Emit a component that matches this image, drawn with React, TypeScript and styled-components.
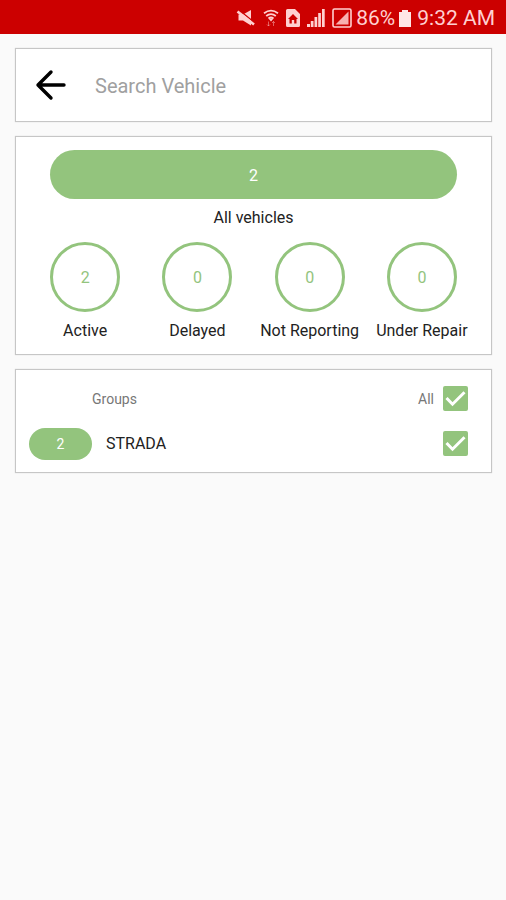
import React, { useState } from "react";
import styled, { createGlobalStyle } from "styled-components";

const GREEN = "#93c47d";
const STATUS_INK = "#ffd0d0";

const GlobalStyle = createGlobalStyle`
  *, *::before, *::after { box-sizing: border-box; }
  body {
    margin: 0;
    background: #fafafa;
    color: #222;
    font-family: Roboto, "Liberation Sans", sans-serif;
  }
  button, input { font: inherit; color: inherit; }
`;

const StatusBar = styled.header`
  display: flex;
  align-items: center;
  justify-content: flex-end;
  height: 34px;
  padding: 2px 11px 0 0;
  background: #cc0000;
  color: ${STATUS_INK};
  font-size: 21px;
  line-height: 24px;

  svg { display: block; flex: none; }
`;

const StatusIcons = styled.div`
  display: flex;
  align-items: center;
  gap: 7px;
  margin-right: 4px;
`;

const BatteryLevel = styled.span`
  margin-right: 4px;
`;

const Clock = styled.time`
  margin-left: 6px;
`;

const Page = styled.main`
  display: flex;
  flex-direction: column;
  gap: 14px;
  padding: 14px 14px 14px 15px;
`;

const Card = styled.section`
  background: #fff;
  border: 1px solid #c6c6c6;
  box-shadow: 0 0 1px #d0d0d0;
`;

const SearchCard = styled(Card)`
  display: flex;
  align-items: center;
  gap: 28px;
  height: 74px;
  padding: 0 19px;
`;

const BackButton = styled.button`
  display: block;
  flex: none;
  padding: 0;
  border: 0;
  background: none;
  color: #000;
  cursor: pointer;

  svg { display: block; }
`;

const SearchInput = styled.input`
  flex: 1;
  min-width: 0;
  height: 40px;
  padding: 2px 0 0;
  border: 0;
  outline: 0;
  background: none;
  font-size: 20px;

  &::placeholder { color: #a0a0a0; opacity: 1; }
`;

const SummaryCard = styled(Card)`
  padding: 13px;
`;

const Total = styled.div`
  display: flex;
  flex-direction: column;
  align-items: center;
  gap: 9px;
  padding: 0 21px;
`;

const TotalButton = styled.button`
  width: 100%;
  height: 49px;
  padding: 2px 0 0;
  border: 0;
  border-radius: 25px;
  background: ${GREEN};
  color: #fff;
  font-size: 16px;
  cursor: pointer;
`;

const Label = styled.span`
  font-size: 16px;
  line-height: 20px;
  white-space: nowrap;
`;

const StatusGrid = styled.div`
  display: grid;
  grid-template-columns: repeat(4, 1fr);
  margin-top: 14px;
`;

const StatusItem = styled.div`
  display: flex;
  flex-direction: column;
  align-items: center;
  gap: 9px;
`;

const StatusButton = styled.button`
  width: 70px;
  height: 70px;
  padding: 1px 0 0;
  border: 3px solid ${GREEN};
  border-radius: 50%;
  background: #fff;
  color: ${GREEN};
  font-size: 16px;
  cursor: pointer;
`;

const GroupsCard = styled(Card)`
  display: flex;
  flex-direction: column;
  gap: 13px;
  padding: 13px 23px 12px 13px;
`;

const GroupRow = styled.div`
  display: grid;
  grid-template-columns: 63px 1fr auto;
  align-items: center;
  column-gap: 14px;
  height: 32px;
`;

const GroupsTitle = styled.h2`
  grid-column: 1 / 3;
  margin: 0;
  padding-left: 63px;
  color: #777;
  font-size: 14px;
  font-weight: 400;
  line-height: 18px;
`;

const GroupCount = styled.span`
  height: 32px;
  border-radius: 16px;
  background: ${GREEN};
  color: #fff;
  font-size: 14px;
  line-height: 33px;
  text-align: center;
`;

const CheckLabel = styled.label`
  display: flex;
  align-items: center;
  gap: 9px;
  color: #777;
  font-size: 14px;
  line-height: 18px;
  cursor: pointer;
`;

const CheckBox = styled.span`
  display: grid;
  width: 25px;
  height: 26px;

  > * { grid-area: 1 / 1; }
  svg { display: block; pointer-events: none; }
`;

const CheckInput = styled.input`
  appearance: none;
  width: 25px;
  height: 25px;
  margin: 0;
  border: 2px solid ${GREEN};
  border-radius: 2px;
  background: #fff;
  cursor: pointer;

  &:checked { background: ${GREEN}; }
  &:not(:checked) + svg { visibility: hidden; }
`;

function MutedIcon() {
  return (
    <svg width="20" height="18" viewBox="0 0 20 18" aria-hidden="true">
      <path d="M2.500 5.500H7L15 1v15.500L7 11.500H2.500z" fill={STATUS_INK} />
      <path d="M3 1l16 13" stroke="#cc0000" strokeWidth="1.500" />
      <path d="M1.500 2.500L18 15.500" stroke={STATUS_INK} strokeWidth="2.600" />
    </svg>
  );
}

function WifiIcon() {
  return (
    <svg width="16" height="18" viewBox="0 0 16 18" aria-hidden="true" fill="none" stroke={STATUS_INK}>
      <path d="M1 4.200Q8-1 15 4.200M3.200 7Q8 3.200 12.800 7M5.500 9.500Q8 7.500 10.500 9.500" strokeWidth="1.800" />
      <path d="M5.500 9.500h5l-2.500 3z" fill={STATUS_INK} stroke="none" />
      <path d="M5.500 12.500v4.500M4 15.500l1.500 1.500 1.500-1.500M10.500 17v-4.500M9 14l1.500-1.500 1.500 1.500" opacity="0.45" />
    </svg>
  );
}

function SimHomeIcon() {
  return (
    <svg width="14" height="18" viewBox="0 0 14 18" aria-hidden="true">
      <path d="M1.500 0H9l5 5v11.500a1.500 1.500 0 0 1-1.500 1.500h-11A1.500 1.500 0 0 1 0 16.500v-15A1.500 1.500 0 0 1 1.500 0z" fill={STATUS_INK} />
      <path d="M7 5l5 5h-1.500v4.500H8.200V11H5.800v3.500H3.500V10H2z" fill="#cc0000" />
    </svg>
  );
}

function SignalIcon() {
  return (
    <svg width="18" height="18" viewBox="0 0 18 18" aria-hidden="true" fill={STATUS_INK}>
      <path d="M0 15h3v3H0zM3.800 12h2.700v6H3.800zM7.500 8h2.700v10H7.500zM11.200 4h2.700v14h-2.700zM15 0h2.700v18H15z" />
    </svg>
  );
}

function BoxedSignalIcon() {
  return (
    <svg width="20" height="20" viewBox="0 0 20 20" aria-hidden="true">
      <rect x="1" y="1" width="18" height="18" rx="1.500" fill="none" stroke={STATUS_INK} strokeWidth="1.600" />
      <path d="M3.500 16.500l13-13v13z" fill={STATUS_INK} opacity="0.85" />
    </svg>
  );
}

function BatteryIcon() {
  return (
    <svg width="12" height="17" viewBox="0 0 12 17" aria-hidden="true">
      <path d="M3 0h6v2h3v15H0V2h3z" fill="#ffe6e6" />
    </svg>
  );
}

function BackArrow() {
  return (
    <svg width="32" height="32" viewBox="0 0 32 32" aria-hidden="true" fill="none" stroke="currentColor" strokeWidth="3.400" strokeLinecap="round" strokeLinejoin="round">
      <path d="M29 16H3M16 3L3 16l13 13" />
    </svg>
  );
}

interface CheckProps {
  name: string;
  caption?: string;
  checked: boolean;
  onChange: (checked: boolean) => void;
}

function Check({ name, caption, checked, onChange }: CheckProps) {
  return (
    <CheckLabel>
      {caption}
      <CheckBox>
        <CheckInput
          type="checkbox"
          aria-label={name}
          checked={checked}
          onChange={(event) => onChange(event.target.checked)}
        />
        <svg width="25" height="25" viewBox="0 0 25 25" aria-hidden="true">
          <path d="M3.500 12l6 6.200L21.500 6.200" fill="none" stroke="#fff" strokeWidth="3" />
        </svg>
      </CheckBox>
    </CheckLabel>
  );
}

const statuses = [
  { label: "Active", count: 2 },
  { label: "Delayed", count: 0 },
  { label: "Not Reporting", count: 0 },
  { label: "Under Repair", count: 0 },
];

export default function App() {
  const [query, setQuery] = useState("");
  const [selected, setSelected] = useState(true);

  return (
    <>
      <GlobalStyle />
      <StatusBar>
        <StatusIcons>
          <MutedIcon />
          <WifiIcon />
          <SimHomeIcon />
          <SignalIcon />
          <BoxedSignalIcon />
        </StatusIcons>
        <BatteryLevel>86%</BatteryLevel>
        <BatteryIcon />
        <Clock>9:32 AM</Clock>
      </StatusBar>
      <Page>
        <SearchCard>
          <BackButton type="button" aria-label="Back">
            <BackArrow />
          </BackButton>
          <SearchInput
            type="text"
            aria-label="Search Vehicle"
            placeholder="Search Vehicle"
            value={query}
            onChange={(event) => setQuery(event.target.value)}
          />
        </SearchCard>
        <SummaryCard>
          <Total>
            <TotalButton type="button" aria-describedby="total-label">2</TotalButton>
            <Label id="total-label">All vehicles</Label>
          </Total>
          <StatusGrid>
            {statuses.map(({ label, count }, index) => (
              <StatusItem key={label}>
                <StatusButton type="button" aria-describedby={`status-${index}`}>{count}</StatusButton>
                <Label id={`status-${index}`}>{label}</Label>
              </StatusItem>
            ))}
          </StatusGrid>
        </SummaryCard>
        <GroupsCard>
          <GroupRow>
            <GroupsTitle>Groups</GroupsTitle>
            <Check name="All" caption="All" checked={selected} onChange={setSelected} />
          </GroupRow>
          <GroupRow>
            <GroupCount>2</GroupCount>
            <Label>STRADA</Label>
            <Check name="STRADA" checked={selected} onChange={setSelected} />
          </GroupRow>
        </GroupsCard>
      </Page>
    </>
  );
}
